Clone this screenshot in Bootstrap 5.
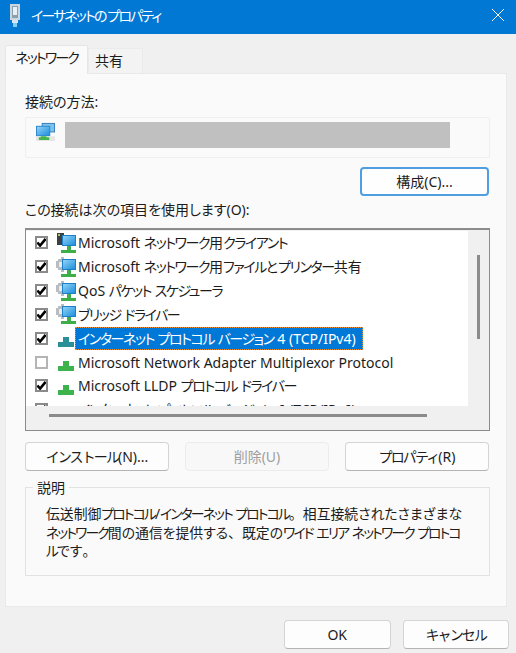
<!DOCTYPE html>
<html lang="ja">
<head>
<meta charset="utf-8">
<title>イーサネットのプロパティ</title>
<link href="https://cdn.jsdelivr.net/npm/bootstrap@5.3.0/dist/css/bootstrap.min.css" rel="stylesheet">
<style>
html,body{height:653px;overflow:hidden}
body{background:#f0f0f0;color:#1c1c1c;font-family:"Noto Sans","Noto Sans CJK JP",sans-serif;font-size:14px;line-height:19px;font-feature-settings:"palt"}
.kt{letter-spacing:-1.9px}
.fw{font-feature-settings:normal}
.titlebar{height:34px;background:#0078d4;color:#fff;padding:0 11px 4px 7px}
.titlebar span.ttl{margin-left:8px;font-size:14px}
.tabs-strip{margin:11px 0 0 5px;border:0;align-items:flex-end;position:relative;z-index:1}
.tabs-strip .nav-link{border-radius:0;color:#1c1c1c;padding:0;text-align:center;background:#f3f3f3;border:1px solid #ebebeb;border-bottom:0}
.tabs-strip .nav-link.tab-on{background:#fafafa;width:83px;height:29px;line-height:24px;margin-bottom:-1px;border-color:#e6e6e6;border-radius:2px 2px 0 0}
.tabs-strip .nav-link.tab-off{width:55px;height:25px;line-height:23px;margin:0;text-align:left;padding-left:6px}
.sheet{margin:0 9px 0 5px;height:534px;background:#fafafa;border:1px solid #e9e9e9;padding:18px 16px 0 19px}
.conn-box{height:41px;margin-top:6px;background:#fafafa;border:1px solid #efefef;border-radius:2px;padding:4px 39px 0 10px;gap:10px;align-items:flex-start}
.redacted{height:26px;background:#c0c0c0;flex:1}
.win-btn{height:29px;padding:0;font-size:14px;line-height:26px;color:#1c1c1c;background:#fdfdfd;border:1px solid #d4d4d4;border-bottom-color:#b4b4b4;border-radius:4px;font-family:inherit}
.win-btn.btn-main{border:2px solid #4f9fe0;background:#fefefe;width:129px;line-height:24px}
.win-btn:disabled{opacity:1;color:#9f9f9f;background:#f8f8f8;border-color:#ececec}
.cfg-row{margin-top:9px;padding-right:1px}
.use-lbl{margin-top:4px}
.item-box{height:203px;margin-top:9px;border:1px solid #8c8c8c;border-top-width:2px;display:grid;grid-template-columns:1fr 21px;grid-template-rows:176px 1fr;background:#f0f0f0}
.item-list{background:#fff;overflow:hidden;padding:0 0 0 9px;margin:1px 0 0 0}
.item-row{height:23.85px;align-items:center}
.item-row .kt{letter-spacing:-1.45px}
.item-row .form-check-input{width:13px;height:13px;margin:0 8px 0 0;flex:none;border-radius:0;border:2px solid #8a8a8a;background-color:#fff}
.item-row .form-check-input:not(:checked){border:2px solid #b4b4b4}
.item-row .form-check-input:checked{background-color:#fff;border-color:#8a8a8a;background-size:11px;background-image:url("data:image/svg+xml,%3csvg xmlns='http://www.w3.org/2000/svg' viewBox='0 0 12 12'%3e%3cpath fill='none' stroke='%23000' stroke-width='2.8' d='M1.5 6l3 3.4L10.5 2'/%3e%3c/svg%3e")}
.item-row svg{flex:none}
.item-row .lbl{padding:0 1px;height:23px;line-height:22px;white-space:nowrap;border:1px solid transparent}
.item-row .lbl.sel{background:#0078d7;color:#fff;border:1px dotted #e8913a;padding-right:6px;margin-left:-1px;padding-left:2px}
.vtrack{padding:25px 9px 0 9px}
.vthumb{width:3px;height:84px;background:#8b8b8b}
.htrack{padding:8px 0 0 23px;grid-column:1 / span 2}
.hthumb{width:378px;height:3px;background:#8b8b8b}
.action-row{margin-top:11px;gap:16px;padding-right:1px}
.action-row .win-btn{flex:1}
.desc-set{margin-top:7px;height:98px;border:0}
.desc-set legend{float:none;width:auto;font-size:14px;line-height:19px;margin:0 0 -10px 8px;padding:0 4px;position:relative;z-index:1;background:#fafafa}
.desc-body{border:1.5px solid #e2e2e2;height:89px;padding:17px 10px 0 20px;font-size:13.85px;line-height:18.7px;white-space:nowrap}
.footer-row{margin-top:13px;padding-right:7px;gap:12px;justify-content:flex-end}
.footer-row .win-btn{width:106.5px}
.tb-close{display:block}
</style>
</head>
<body>
<svg width="0" height="0" class="d-block position-absolute">
<defs>
<linearGradient id="scr" x1="0" y1="0" x2="1" y2="1"><stop offset="0" stop-color="#8fd3f7"/><stop offset="1" stop-color="#1f8fdc"/></linearGradient>
<symbol id="client" viewBox="0 0 20 20"><path fill="#3c3f43" d="M1 0h7v12H1z"/><path fill="#a9c46c" d="M2 1h2v2H2z"/><path fill="#1b7fc9" d="M6 2h14v11H6z"/><path fill="url(#scr)" d="M7 3h12v9H7z"/><path fill="#3fae49" d="M11 13h4v4h-4z"/><path fill="#3fae49" d="M5 17h15v3H5z"/></symbol>
<symbol id="service" viewBox="0 0 20 20"><path fill="#b9bdc0" d="M2 2h3V0h3v2h3v2h2v6h-2v3H8v2H5v-2H2v-2H0V4h2z"/><path fill="#fff" d="M3 5h3v5H3z" opacity=".7"/><path fill="#1b7fc9" d="M6 2h14v11H6z"/><path fill="url(#scr)" d="M7 3h12v9H7z"/><path fill="#3fae49" d="M11 13h4v4h-4z"/><path fill="#3fae49" d="M5 17h15v3H5z"/></symbol>
<symbol id="proto" viewBox="0 0 18 10"><path fill="#3cb44b" d="M6 0h6v5h5v5H1V5h5z"/></symbol>
<symbol id="proto-sel" viewBox="0 0 18 10"><path fill="#2a8f96" d="M6 0h6v5h5v5H1V5h5z"/></symbol>
<symbol id="net" viewBox="0 0 20 20"><path fill="#3a7fb8" d="M6 1h14v10H6z"/><path fill="#7cc4ef" d="M7 2h12v8H7z"/><path fill="#2f86c9" d="M0 4h15v11H0z"/><path fill="url(#scr)" d="M1 5h13v9H1z"/><path fill="#e6e6e6" d="M0 15h20v5H0z"/><path fill="#43b649" d="M5 15h6v1h3v3H3v-3h2z"/></symbol>
</defs>
</svg>

<header class="titlebar d-flex align-items-center">
<svg width="16" height="25" viewBox="0 0 16 25"><path fill="#c9d6df" d="M3 1h10v16H3z"/><path fill="#8aa0ae" d="M5 3h6v12H5z"/><path fill="#e9eef1" d="M6 4h4v8H6z"/><path fill="#d8e6ee" d="M5 17h6v3H5z"/><path fill="#7fd0f0" d="M6 20h4v4H6z"/></svg>
<span class="ttl"><span class="kt">イーサネット</span>の<span class="kt">プロパティ</span></span>
<svg class="tb-close ms-auto" width="14" height="14" viewBox="0 0 14 14"><path stroke="#fff" stroke-width="1" fill="none" d="M1 1l12 12M13 1L1 13"/></svg>
</header>

<ul class="nav nav-tabs tabs-strip">
<li class="nav-item"><a class="nav-link tab-on" href="#"><span class="kt">ネットワーク</span></a></li>
<li class="nav-item"><a class="nav-link tab-off" href="#">共有</a></li>
</ul>

<main class="sheet">
<div>接続の方法:</div>
<div class="conn-box d-flex">
<svg width="19" height="19"><use href="#net"/></svg>
<div class="redacted"></div>
</div>
<div class="d-flex justify-content-end cfg-row"><button type="button" class="btn win-btn btn-main">構成(C)...</button></div>
<div class="use-lbl">この接続は次の項目を使用します(O):</div>
<div class="item-box">
<div class="item-list">
<div class="item-row d-flex"><input class="form-check-input" type="checkbox" checked aria-label="a"><svg width="20" height="20"><use href="#client"/></svg><span class="lbl">Microsoft <span class="kt">ネットワーク</span>用<span class="kt">クライアント</span></span></div>
<div class="item-row d-flex"><input class="form-check-input" type="checkbox" checked aria-label="b"><svg width="20" height="20"><use href="#service"/></svg><span class="lbl">Microsoft <span class="kt">ネットワーク</span>用<span class="kt">ファイル</span>と<span class="kt">プリンター</span>共有</span></div>
<div class="item-row d-flex"><input class="form-check-input" type="checkbox" checked aria-label="c"><svg width="20" height="20"><use href="#service"/></svg><span class="lbl">QoS <span class="kt">パケット</span> <span class="kt">スケジューラ</span></span></div>
<div class="item-row d-flex"><input class="form-check-input" type="checkbox" checked aria-label="d"><svg width="20" height="20"><use href="#service"/></svg><span class="lbl"><span class="kt">ブリッジ</span> <span class="kt">ドライバー</span></span></div>
<div class="item-row d-flex"><input class="form-check-input" type="checkbox" checked aria-label="e"><svg width="20" height="10" class="mt-2"><use href="#proto-sel"/></svg><span class="lbl sel"><span class="kt">インターネット</span> <span class="kt">プロトコル</span> <span class="kt">バージョン</span>&nbsp;4 (TCP/IPv4)</span></div>
<div class="item-row d-flex"><input class="form-check-input" type="checkbox" aria-label="f"><svg width="20" height="10" class="mt-2"><use href="#proto"/></svg><span class="lbl">Microsoft Network Adapter Multiplexor Protocol</span></div>
<div class="item-row d-flex"><input class="form-check-input" type="checkbox" checked aria-label="g"><svg width="20" height="10" class="mt-2"><use href="#proto"/></svg><span class="lbl">Microsoft LLDP <span class="kt">プロトコル</span> <span class="kt">ドライバー</span></span></div>
<div class="item-row d-flex"><input class="form-check-input" type="checkbox" checked aria-label="h"><svg width="20" height="10" class="mt-2"><use href="#proto"/></svg><span class="lbl"><span class="kt">インターネット</span> <span class="kt">プロトコル</span> <span class="kt">バージョン</span>&nbsp;6 (TCP/IPv6)</span></div>
</div>
<div class="vtrack"><div class="vthumb"></div></div>
<div class="htrack"><div class="hthumb"></div></div>
</div>
<div class="action-row d-flex">
<button type="button" class="btn win-btn"><span class="kt">インストール</span>(N)...</button>
<button type="button" class="btn win-btn" disabled>削除(U)</button>
<button type="button" class="btn win-btn"><span class="kt">プロパティ</span>(R)</button>
</div>
<fieldset class="desc-set">
<legend>説明</legend>
<div class="desc-body">伝送制御<span class="kt">プロトコル</span>/<span class="kt">インターネット</span> <span class="kt">プロトコル</span><span class="fw">。</span>相互接続されたさまざまな<br><span class="kt">ネットワーク</span>間の通信を提供する<span class="fw">、</span>既定の<span class="kt">ワイド</span> <span class="kt">エリア</span> <span class="kt">ネットワーク</span> <span class="kt">プロトコ</span><br><span class="kt">ル</span>です<span class="fw">。</span></div>
</fieldset>
</main>

<footer class="footer-row d-flex">
<button type="button" class="btn win-btn">OK</button>
<button type="button" class="btn win-btn"><span class="kt">キャンセル</span></button>
</footer>
<script src="https://cdn.jsdelivr.net/npm/bootstrap@5.3.0/dist/js/bootstrap.bundle.min.js"></script>
</body>
</html>
